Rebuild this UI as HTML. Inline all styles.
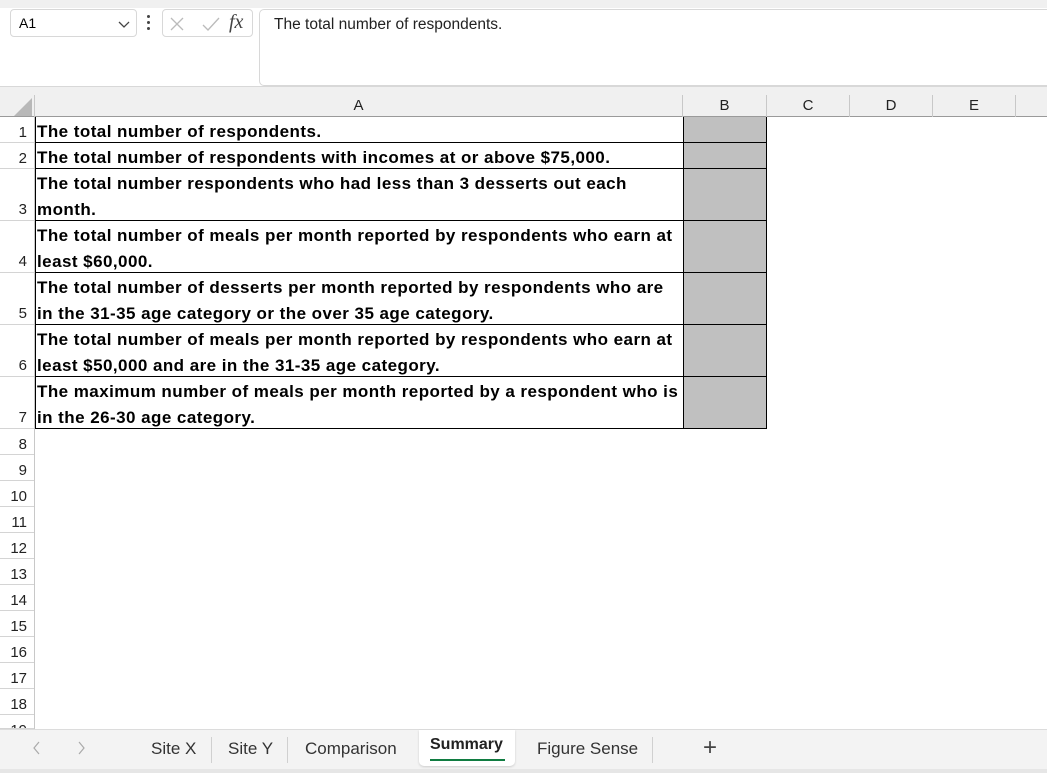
<!DOCTYPE html>
<html><head><style>
body{margin:0;width:1047px;height:773px;position:relative;overflow:hidden;background:#fff;font-family:"Liberation Sans",sans-serif;}
.a{position:absolute;}
.rh{position:absolute;left:0;width:34px;text-align:right;font-size:15px;color:#222;box-sizing:border-box;padding-right:7px;padding-top:3px;border-bottom:1px solid #d4d4d4;}
.cell{position:absolute;left:35px;width:648px;font-weight:bold;font-size:17px;letter-spacing:0.45px;line-height:26px;color:#000;padding-left:2px;padding-top:2px;box-sizing:border-box;border-bottom:1px solid #000;white-space:nowrap;overflow:hidden;}
.b{position:absolute;left:683px;width:84px;background:#c0c0c0;border-left:1px solid #000;border-right:1px solid #000;border-bottom:1px solid #000;box-sizing:border-box;}
.ch{position:absolute;top:95px;height:22px;font-size:15px;text-align:center;line-height:22px;color:#222;border-right:1px solid #c8c8c8;box-sizing:border-box;}
.tab{position:absolute;top:739px;font-size:17px;color:#333;}
.sep{position:absolute;top:737px;width:1px;height:26px;background:#d0d0d0;}
</style></head><body>
<div class="a" style="left:0;top:0;width:1047px;height:8px;background:#f0f0f0"></div>
<div class="a" style="left:10px;top:9px;width:127px;height:28px;border:1px solid #d8d8d8;border-radius:4px;box-sizing:border-box;font-size:14px;line-height:26px;padding-left:8px;">A1
<svg class="a" style="left:107px;top:11px" width="12" height="8"><path d="M1 1 L6 6 L11 1" fill="none" stroke="#444" stroke-width="1.3"/></svg></div>
<div class="a" style="left:147px;top:15px;width:3px;height:3px;background:#444;border-radius:2px"></div>
<div class="a" style="left:147px;top:21px;width:3px;height:3px;background:#444;border-radius:2px"></div>
<div class="a" style="left:147px;top:27px;width:3px;height:3px;background:#444;border-radius:2px"></div>
<div class="a" style="left:162px;top:9px;width:91px;height:28px;border:1px solid #d8d8d8;border-radius:4px;box-sizing:border-box;">
<svg class="a" style="left:6px;top:6px" width="60" height="16"><path d="M2 2 L14 14 M14 2 L2 14" stroke="#bbb" stroke-width="1.3"/><path d="M34 9 L39 14 L50 2" fill="none" stroke="#bbb" stroke-width="1.3"/></svg>
<span class="a" style="left:66px;top:1px;font-family:'Liberation Serif',serif;font-style:italic;font-size:20px;color:#444">fx</span></div>
<div class="a" style="left:259px;top:9px;width:800px;height:77px;border:1px solid #d8d8d8;border-radius:5px;box-sizing:border-box;font-size:15.5px;padding:6px 0 0 14px;color:#222">The total number of respondents.</div>
<div class="a" style="left:0;top:86px;width:1047px;height:31px;background:#f0f0f0;border-top:1px solid #d8d8d8;border-bottom:1px solid #9a9a9a;box-sizing:border-box"></div>
<svg class="a" style="left:14px;top:98px" width="18" height="18"><path d="M18 0 L18 18 L0 18 Z" fill="#b8b8b8"/></svg>
<div class="a" style="left:34px;top:95px;width:1px;height:22px;background:#c8c8c8"></div>
<div class="ch" style="left:35px;width:648px">A</div>
<div class="ch" style="left:683px;width:84px">B</div>
<div class="ch" style="left:767px;width:83px">C</div>
<div class="ch" style="left:850px;width:83px">D</div>
<div class="ch" style="left:933px;width:83px">E</div>
<div class="a" style="left:34px;top:117px;width:1px;height:612px;background:#c8c8c8"></div>

<div class="rh" style="top:117px;height:26px;line-height:26px">1</div>
<div class="rh" style="top:143px;height:26px;line-height:26px">2</div>
<div class="rh" style="top:169px;height:52px;line-height:76px">3</div>
<div class="rh" style="top:221px;height:52px;line-height:76px">4</div>
<div class="rh" style="top:273px;height:52px;line-height:76px">5</div>
<div class="rh" style="top:325px;height:52px;line-height:76px">6</div>
<div class="rh" style="top:377px;height:52px;line-height:76px">7</div>
<div class="rh" style="top:429px;height:26px;line-height:26px">8</div>
<div class="rh" style="top:455px;height:26px;line-height:26px">9</div>
<div class="rh" style="top:481px;height:26px;line-height:26px">10</div>
<div class="rh" style="top:507px;height:26px;line-height:26px">11</div>
<div class="rh" style="top:533px;height:26px;line-height:26px">12</div>
<div class="rh" style="top:559px;height:26px;line-height:26px">13</div>
<div class="rh" style="top:585px;height:26px;line-height:26px">14</div>
<div class="rh" style="top:611px;height:26px;line-height:26px">15</div>
<div class="rh" style="top:637px;height:26px;line-height:26px">16</div>
<div class="rh" style="top:663px;height:26px;line-height:26px">17</div>
<div class="rh" style="top:689px;height:26px;line-height:26px">18</div>
<div class="rh" style="top:715px;height:14px;line-height:26px;overflow:hidden">19</div>

<div class="cell" style="top:117px;height:26px">The total number of respondents.</div>
<div class="cell" style="top:143px;height:26px">The total number of respondents with incomes at or above $75,000.</div>
<div class="cell" style="top:169px;height:52px">The total number respondents who had less than 3 desserts out each<br>month.</div>
<div class="cell" style="top:221px;height:52px">The total number of meals per month reported by respondents who earn at<br>least $60,000.</div>
<div class="cell" style="top:273px;height:52px">The total number of desserts per month reported by respondents who are<br>in the 31-35 age category or the over 35 age category.</div>
<div class="cell" style="top:325px;height:52px">The total number of meals per month reported by respondents who earn at<br>least $50,000 and are in the 31-35 age category.</div>
<div class="cell" style="top:377px;height:52px">The maximum number of meals per month reported by a respondent who is<br>in the 26-30 age category.</div>
<div class="a" style="left:35px;top:117px;width:1px;height:312px;background:#000"></div>

<div class="b" style="top:117px;height:26px"></div>
<div class="b" style="top:143px;height:26px"></div>
<div class="b" style="top:169px;height:52px"></div>
<div class="b" style="top:221px;height:52px"></div>
<div class="b" style="top:273px;height:52px"></div>
<div class="b" style="top:325px;height:52px"></div>
<div class="b" style="top:377px;height:52px"></div>

<div class="a" style="left:0;top:729px;width:1047px;height:44px;background:#f3f3f3;border-top:1px solid #dcdcdc;box-sizing:border-box"></div>
<div class="a" style="left:0;top:769px;width:1047px;height:4px;background:#e6e6e6"></div>
<svg class="a" style="left:30px;top:740px" width="60" height="16"><path d="M9 2 L4 8 L9 14" fill="none" stroke="#aaa" stroke-width="1.2"/><path d="M49 2 L54 8 L49 14" fill="none" stroke="#aaa" stroke-width="1.2"/></svg>
<div class="tab" style="left:151px">Site X</div>
<div class="sep" style="left:211px"></div>
<div class="tab" style="left:228px">Site Y</div>
<div class="sep" style="left:287px"></div>
<div class="tab" style="left:305px">Comparison</div>
<div class="a" style="left:419px;top:730px;width:96px;height:36px;background:#fff;border-radius:0 0 5px 5px;box-shadow:0 1px 2px #ccc"></div>
<div class="tab" style="left:430px;top:736px;font-weight:bold;color:#222;font-size:16px">Summary</div>
<div class="a" style="left:430px;top:759px;width:75px;height:2px;background:#107c41"></div>
<div class="tab" style="left:537px">Figure Sense</div>
<div class="sep" style="left:652px"></div>
<div class="tab" style="left:703px;top:734px;font-size:24px;color:#444">+</div>
</body></html>
